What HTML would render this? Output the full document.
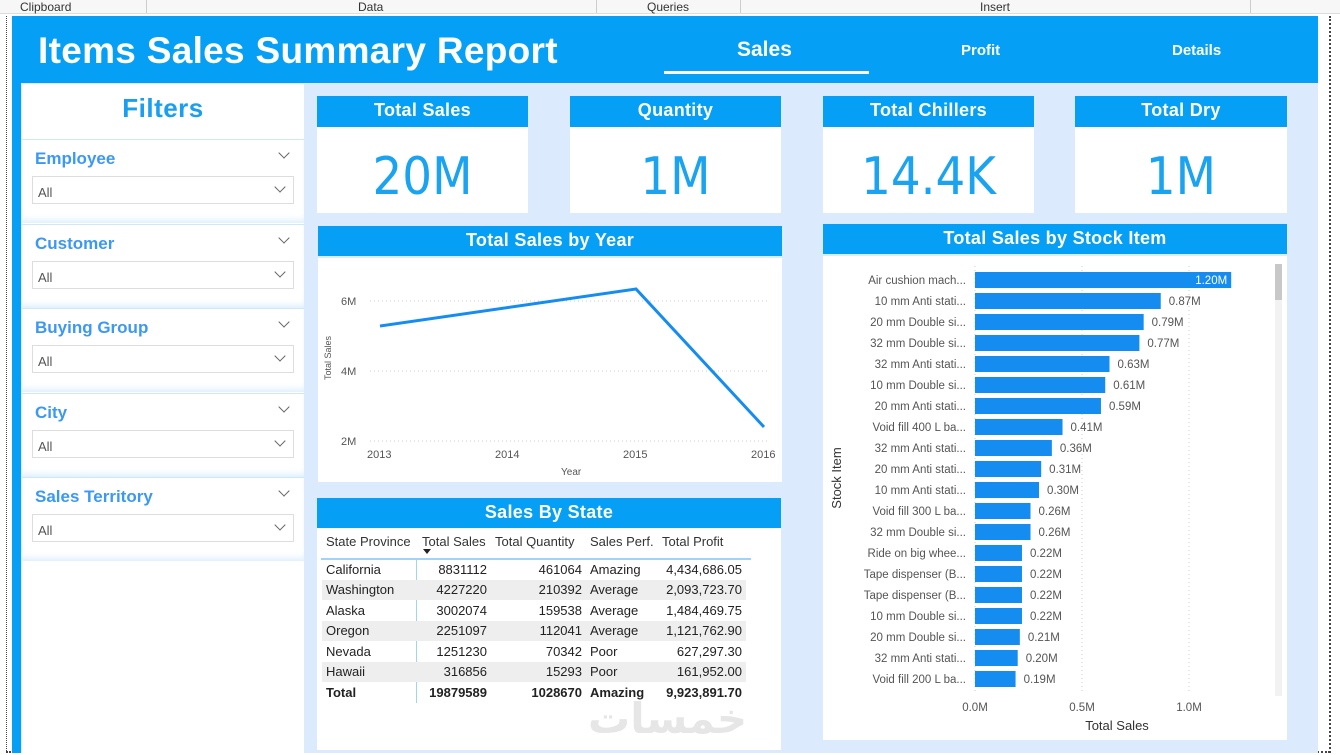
<!DOCTYPE html>
<html><head><meta charset="utf-8">
<style>
*{margin:0;padding:0;box-sizing:border-box}
body{width:1340px;height:755px;overflow:hidden;background:#fff;font-family:"Liberation Sans",sans-serif;position:relative}
.a{position:absolute}
.rib{top:0;height:14px;font-size:12px;color:#333;background:#f7f7f7;border-bottom:1px solid #ddd;width:1340px}
.rib span{position:absolute;top:0}
.rib i{position:absolute;top:0;width:1px;height:13px;background:#ccc}
.hdr{background:#05a0f5;color:#fff;font-weight:bold;text-align:center;letter-spacing:0.3px}
.card{background:#fff}
.big{color:#1aa3f0;font-size:52px;text-align:center;font-family:"DejaVu Sans Condensed","DejaVu Sans",sans-serif;}
.flt{left:22px;width:282px;background:#fff;border-top:1px solid #cfe6fb;box-shadow:0 -6px 8px -4px #d6ebfc inset}
.flt b{position:absolute;left:13px;top:9px;color:#3b98f5;font-size:17px}
.dd{position:absolute;left:10px;width:262px;height:28px;border:1px solid #ddd;font-size:13px;color:#555;padding:8px 0 0 5px}
.chev{position:absolute;width:8px;height:8px;border-right:1.3px solid #666;border-bottom:1.3px solid #666;transform:rotate(45deg)}
table{border-collapse:collapse;font-size:13px;color:#222}
td{height:20.5px;padding:0 4px;white-space:nowrap}
</style></head><body>
<div class="a rib">
<span style="left:20px">Clipboard</span><i style="left:146px"></i>
<span style="left:358px">Data</span><i style="left:596px"></i>
<span style="left:647px">Queries</span><i style="left:740px"></i>
<span style="left:980px">Insert</span><i style="left:1250px"></i>
</div>
<div class="a" style="left:6px;top:16px;width:1px;height:737px;border-left:1px dotted #444"></div>
<div class="a" style="left:6px;top:751px;width:1324px;border-top:2px dotted #444"></div>
<div class="a" style="left:1329px;top:16px;height:737px;border-left:2px dotted #444"></div>
<div class="a" style="left:12px;top:16px;width:1306px;height:737px;background:#dbeafc"></div>
<div class="a" style="left:12px;top:16px;width:1306px;height:67px;background:#05a0f5"></div>
<div class="a" style="left:12px;top:83px;width:9px;height:670px;background:#05a0f5"></div>
<div class="a" style="left:38px;top:30px;color:#fff;font-size:37px;font-weight:bold;font-family:'Liberation Sans',sans-serif;letter-spacing:0.3px">Items Sales Summary Report</div>
<div class="a" style="left:737px;top:38px;color:#fff;font-size:21px;font-weight:bold">Sales</div>
<div class="a" style="left:664px;top:71px;width:205px;height:3px;background:#fff"></div>
<div class="a" style="left:961px;top:42px;color:#fff;font-size:15px;font-weight:bold">Profit</div>
<div class="a" style="left:1172px;top:42px;color:#fff;font-size:15px;font-weight:bold">Details</div>

<div class="a" style="left:22px;top:84px;width:282px;height:669px;background:#fff"></div>
<div class="a" style="left:22px;top:93px;width:282px;text-align:center;color:#1a9ff0;font-size:26px;font-weight:bold;letter-spacing:0.5px">Filters</div>
<div class="a flt" style="top:139px;height:84px"><b>Employee</b><div class="chev" style="left:258px;top:9px"></div><div class="dd" style="top:36px">All<div class="chev" style="left:243px;top:6px"></div></div></div>
<div class="a flt" style="top:224px;height:84px"><b>Customer</b><div class="chev" style="left:258px;top:9px"></div><div class="dd" style="top:36px">All<div class="chev" style="left:243px;top:6px"></div></div></div>
<div class="a flt" style="top:308px;height:84px"><b>Buying Group</b><div class="chev" style="left:258px;top:9px"></div><div class="dd" style="top:36px">All<div class="chev" style="left:243px;top:6px"></div></div></div>
<div class="a flt" style="top:393px;height:84px"><b>City</b><div class="chev" style="left:258px;top:9px"></div><div class="dd" style="top:36px">All<div class="chev" style="left:243px;top:6px"></div></div></div>
<div class="a flt" style="top:477px;height:84px"><b>Sales Territory</b><div class="chev" style="left:258px;top:9px"></div><div class="dd" style="top:36px">All<div class="chev" style="left:243px;top:6px"></div></div></div>

<div class="a hdr" style="left:317px;top:96px;width:211px;height:31px;font-size:18px;line-height:29px">Total Sales</div>
<div class="a card big" style="left:317px;top:127px;width:211px;height:86px;line-height:100px">20M</div>
<div class="a hdr" style="left:570px;top:96px;width:211px;height:31px;font-size:18px;line-height:29px">Quantity</div>
<div class="a card big" style="left:570px;top:127px;width:211px;height:86px;line-height:100px">1M</div>
<div class="a hdr" style="left:823px;top:96px;width:211px;height:31px;font-size:18px;line-height:29px">Total Chillers</div>
<div class="a card big" style="left:823px;top:127px;width:211px;height:86px;line-height:100px">14.4K</div>
<div class="a hdr" style="left:1075px;top:96px;width:212px;height:31px;font-size:18px;line-height:29px">Total Dry</div>
<div class="a card big" style="left:1075px;top:127px;width:212px;height:86px;line-height:100px">1M</div>

<div class="a hdr" style="left:318px;top:226px;width:464px;height:30px;font-size:18px;line-height:28px">Total Sales by Year</div>
<div class="a card" style="left:318px;top:258px;width:464px;height:224px"></div>
<svg class="a" style="left:318px;top:258px" width="464" height="224">
<g stroke="#ccc" stroke-dasharray="1,3"><line x1="52" y1="43" x2="450" y2="43"/><line x1="52" y1="113" x2="450" y2="113"/><line x1="52" y1="183" x2="450" y2="183"/></g>
<polyline points="62,68 318,31 446,169" fill="none" stroke="#148cf0" stroke-width="3"/>
<g font-size="11" fill="#555" font-family="Liberation Sans"><text x="23" y="47">6M</text><text x="23" y="117">4M</text><text x="23" y="187">2M</text>
<text x="49" y="200">2013</text><text x="177" y="200">2014</text><text x="305" y="200">2015</text><text x="433" y="200">2016</text>
<text x="243" y="217" font-size="10">Year</text><text transform="translate(13,122) rotate(-90)" font-size="9">Total Sales</text></g>
</svg>

<div class="a hdr" style="left:317px;top:498px;width:464px;height:30px;font-size:18px;line-height:28px">Sales By State</div>
<div class="a card" style="left:317px;top:528px;width:464px;height:222px"></div>
<div class="a" style="left:321px;top:558px;width:430px;height:2px;background:#9fd3f7"></div>
<div class="a" style="left:416px;top:560px;width:1px;height:143px;background:#9fd3f7"></div>
<div class="a" style="left:423px;top:549px;border:4px solid transparent;border-top:5px solid #222"></div>
<table class="a" style="left:322px;top:529px">
<tr style="height:30px;color:#333;vertical-align:top"><td style="padding-top:5px">State Province</td><td style="padding-top:5px">Total Sales</td><td style="padding-top:5px">Total Quantity</td><td style="padding-top:5px">Sales Perf.</td><td style="padding-top:5px">Total Profit</td></tr>
<tr><td style="width:96px">California</td><td align="right" style="width:73px">8831112</td><td align="right" style="width:95px">461064</td><td style="width:72px">Amazing</td><td align="right" style="width:88px">4,434,686.05</td></tr>
<tr style="background:#eee"><td>Washington</td><td align="right">4227220</td><td align="right">210392</td><td>Average</td><td align="right">2,093,723.70</td></tr>
<tr><td>Alaska</td><td align="right">3002074</td><td align="right">159538</td><td>Average</td><td align="right">1,484,469.75</td></tr>
<tr style="background:#eee"><td>Oregon</td><td align="right">2251097</td><td align="right">112041</td><td>Average</td><td align="right">1,121,762.90</td></tr>
<tr><td>Nevada</td><td align="right">1251230</td><td align="right">70342</td><td>Poor</td><td align="right">627,297.30</td></tr>
<tr style="background:#eee"><td>Hawaii</td><td align="right">316856</td><td align="right">15293</td><td>Poor</td><td align="right">161,952.00</td></tr>
<tr style="font-weight:bold"><td>Total</td><td align="right">19879589</td><td align="right">1028670</td><td>Amazing</td><td align="right">9,923,891.70</td></tr>
</table>
<div class="a" style="left:588px;top:694px;font-size:42px;color:#e6e6e6;font-family:'DejaVu Sans',sans-serif;font-weight:bold">خمسات</div>

<div class="a hdr" style="left:823px;top:224px;width:464px;height:30px;font-size:18px;line-height:28px">Total Sales by Stock Item</div>
<div class="a card" style="left:823px;top:256px;width:464px;height:484px"></div>
<div class="a" style="left:1275px;top:264px;width:7px;height:432px;background:#f2f2f2"></div>
<div class="a" style="left:1275px;top:264px;width:7px;height:36px;background:#c8c8c8"></div>
<svg class="a" style="left:823px;top:256px" width="464" height="484">
<g stroke="#ccc" stroke-dasharray="1,3"><line x1="152" y1="10" x2="152" y2="436"/><line x1="259" y1="10" x2="259" y2="436"/><line x1="366" y1="10" x2="366" y2="436"/></g>
<g font-size="11.5" fill="#555" font-family="Liberation Sans" text-anchor="middle">
<text x="152" y="455">0.0M</text><text x="259" y="455">0.5M</text><text x="366" y="455">1.0M</text>
<text x="294" y="474" font-size="13" fill="#333">Total Sales</text>
<text transform="translate(18,222) rotate(-90)" font-size="13" fill="#333">Stock Item</text>
</g>
<g id="bars" font-size="11.5" font-family="Liberation Sans"></g>
</svg>
<script>
var d=[["Air cushion mach...",1.20],["10 mm Anti stati...",.87],["20 mm Double si...",.79],["32 mm Double si...",.77],["32 mm Anti stati...",.63],["10 mm Double si...",.61],["20 mm Anti stati...",.59],["Void fill 400 L ba...",.41],["32 mm Anti stati...",.36],["20 mm Anti stati...",.31],["10 mm Anti stati...",.30],["Void fill 300 L ba...",.26],["32 mm Double si...",.26],["Ride on big whee...",.22],["Tape dispenser (B...",.22],["Tape dispenser (B...",.22],["10 mm Double si...",.22],["20 mm Double si...",.21],["32 mm Anti stati...",.20],["Void fill 200 L ba...",.19]];
var s="";d.forEach(function(r,i){var y=16+i*21,w=r[1]*213.5;s+='<rect x="152" y="'+(y)+'" width="'+w+'" height="16" fill="#148cf0"/>';s+='<text x="143" y="'+(y+12)+'" text-anchor="end" fill="#555">'+r[0]+'</text>';
if(i==0)s+='<text x="'+(152+w-4)+'" y="'+(y+12)+'" text-anchor="end" fill="#fff">1.20M</text>';else s+='<text x="'+(152+w+8)+'" y="'+(y+12)+'" fill="#555">'+r[1].toFixed(2)+'M</text>';});
document.getElementById("bars").innerHTML=s;
</script>
</body></html>
